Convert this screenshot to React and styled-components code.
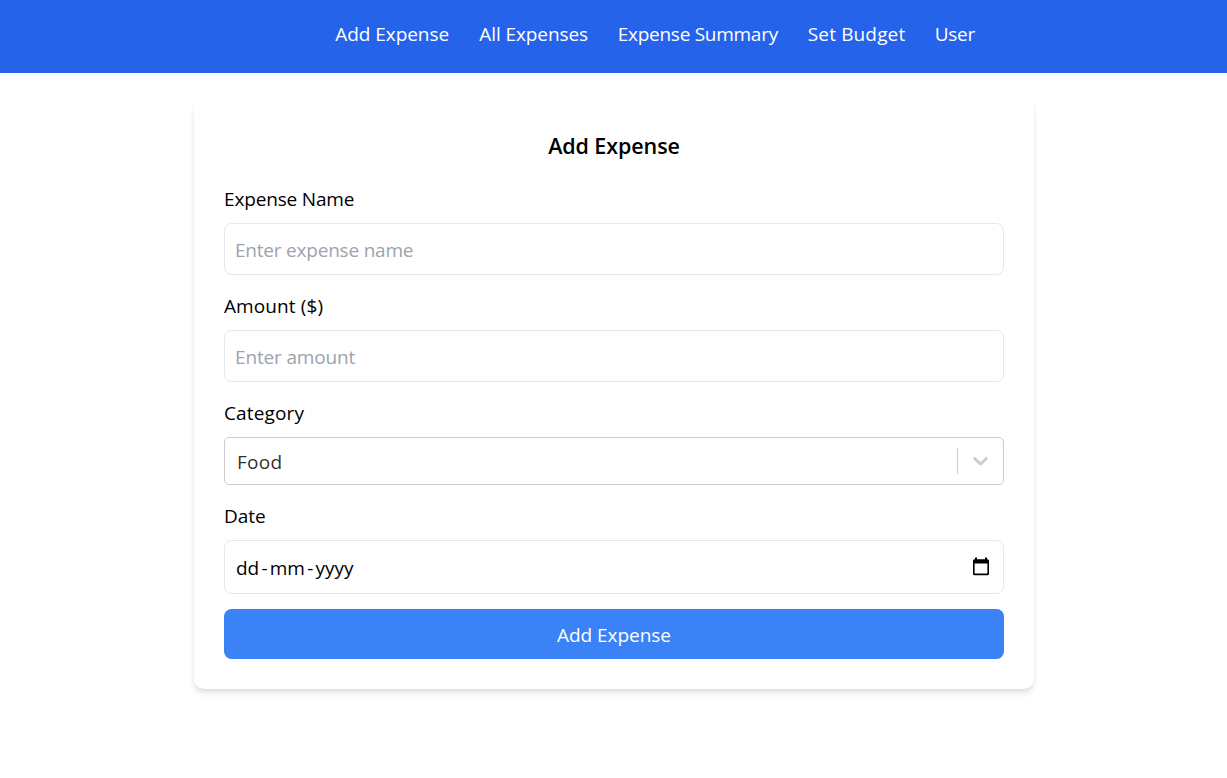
import React from 'react';
import styled, { createGlobalStyle } from 'styled-components';

const GlobalStyle = createGlobalStyle`
  *, *::before, *::after { box-sizing: border-box; }
  body {
    margin: 0;
    min-height: 100vh;
    background: #fff;
    color: #000;
    font-family: 'Segoe UI', 'Open Sans', 'Noto Sans', sans-serif;
    font-size: 19px;
    line-height: 30px;
  }
`;

const Page = styled.div`
  min-height: 100vh;
`;

const NavBar = styled.nav`
  display: flex;
  justify-content: center;
  height: 73px;
  padding: 19px 0 0 83px;
  background: #2563eb;
`;

const NavList = styled.ul`
  display: flex;
  gap: 30px;
  margin: 0;
  padding: 0;
  list-style: none;
`;

const NavItem = styled.li`
  width: ${(p) => p.$width}px;
  white-space: nowrap;
`;

const NavLink = styled.a`
  color: #fff;
  text-decoration: none;
  letter-spacing: ${(p) => p.$tracking || 0}px;
`;

const Card = styled.form`
  display: flex;
  flex-direction: column;
  gap: 15px;
  width: 840px;
  margin: 25px 0 0 194px;
  padding: 30px;
  border-radius: 10px;
  background: #fff;
  box-shadow: 0 5px 7.5px -1.25px rgba(0, 0, 0, 0.1), 0 2.5px 5px -2.5px rgba(0, 0, 0, 0.1);
`;

const Title = styled.h2`
  margin: 0 0 5px;
  font-size: 21.5px;
  font-weight: 600;
  line-height: 35px;
  text-align: center;
  letter-spacing: -0.1px;
`;

const Field = styled.div`
  display: flex;
  flex-direction: column;
  gap: 10px;
`;

const Label = styled.label`
  line-height: 32px;
  height: 30px;
  letter-spacing: ${(p) => p.$tracking || 0}px;
`;

const Input = styled.input`
  width: 100%;
  height: 52px;
  padding: 2px 10px 0;
  border: 1px solid #e5e7eb;
  border-radius: 7.5px;
  background: #fff;
  font: inherit;
  letter-spacing: ${(p) => p.$tracking || 0}px;
  outline: none;
  &::placeholder { color: #9ca3af; opacity: 1; }
`;

const SelectBox = styled.div`
  display: flex;
  align-items: center;
  height: 48px;
  padding-left: 12px;
  border: 1px solid #ccc;
  border-radius: 5px;
  color: #333;
`;

const SelectValue = styled.span`
  flex: 1;
  padding-top: 1px;
  letter-spacing: 0.3px;
`;

const Separator = styled.span`
  width: 1px;
  height: 26px;
  background: #ccc;
`;

const Indicator = styled.span`
  display: flex;
  justify-content: center;
  width: 45px;
  padding-bottom: 1px;
  color: #ccc;
`;

const DateBox = styled.div`
  display: flex;
  align-items: center;
  justify-content: space-between;
  height: 54px;
  padding: 0 13px 0 11px;
  border: 1px solid #e5e7eb;
  border-radius: 7.5px;
`;

const DateText = styled.span`
  display: flex;
  gap: 2.2px;
  padding-top: 2px;
`;

const SubmitButton = styled.button`
  height: 50px;
  padding: 2px 0 0;
  border: 0;
  border-radius: 7.5px;
  background: #3b82f6;
  color: #fff;
  font: inherit;
  letter-spacing: -0.05px;
`;

const NAV_LINKS = [
  { text: 'Add Expense', width: 114, tracking: -0.05 },
  { text: 'All Expenses', width: 108.5, tracking: -0.08 },
  { text: 'Expense Summary', width: 160, tracking: -0.27 },
  { text: 'Set Budget', width: 97, tracking: 0.15 },
  { text: 'User', width: 40, tracking: -0.3 },
];

const ChevronIcon = () => (
  <svg width="25" height="25" viewBox="0 0 20 20" fill="currentColor" aria-hidden="true">
    <path d="M4.516 7.548c0.436-0.446 1.043-0.481 1.576 0l3.908 3.747 3.908-3.747c0.533-0.481 1.141-0.446 1.574 0 0.436 0.445 0.408 1.197 0 1.615-0.406 0.418-4.695 4.502-4.695 4.502-0.217 0.223-0.502 0.335-0.787 0.335s-0.57-0.112-0.789-0.335c0 0-4.287-4.084-4.695-4.502s-0.436-1.17 0-1.615z" />
  </svg>
);

const CalendarIcon = () => (
  <svg width="18" height="20" viewBox="0 0 18 20" aria-hidden="true">
    <path
      fillRule="evenodd"
      d="M3 .6h2v1.600h8V.6h2v1.600h.5A1.500 1.500 0 0 1 17 3.700v13a1.500 1.500 0 0 1-1.500 1.500h-13A1.500 1.500 0 0 1 1 16.700v-13A1.500 1.500 0 0 1 2.500 2.200H3zM2.600 6.500v10.100h12.800V6.500z"
    />
  </svg>
);

export default function App() {
  return (
    <Page>
      <GlobalStyle />
      <NavBar>
        <NavList>
          {NAV_LINKS.map((link) => (
            <NavItem key={link.text} $width={link.width}>
              <NavLink href="#" $tracking={link.tracking}>{link.text}</NavLink>
            </NavItem>
          ))}
        </NavList>
      </NavBar>
      <Card>
        <Title>Add Expense</Title>
        <Field>
          <Label htmlFor="name" $tracking={-0.16}>Expense Name</Label>
          <Input id="name" placeholder="Enter expense name" $tracking={-0.21} />
        </Field>
        <Field>
          <Label htmlFor="amount" $tracking={0.1}>Amount ($)</Label>
          <Input id="amount" placeholder="Enter amount" $tracking={-0.15} />
        </Field>
        <Field>
          <Label $tracking={0.14}>Category</Label>
          <SelectBox>
            <SelectValue>Food</SelectValue>
            <Separator />
            <Indicator><ChevronIcon /></Indicator>
          </SelectBox>
        </Field>
        <Field>
          <Label>Date</Label>
          <DateBox>
            <DateText><span>dd</span><span>-</span><span>mm</span><span>-</span><span>yyyy</span></DateText>
            <CalendarIcon />
          </DateBox>
        </Field>
        <SubmitButton type="button">Add Expense</SubmitButton>
      </Card>
    </Page>
  );
}
